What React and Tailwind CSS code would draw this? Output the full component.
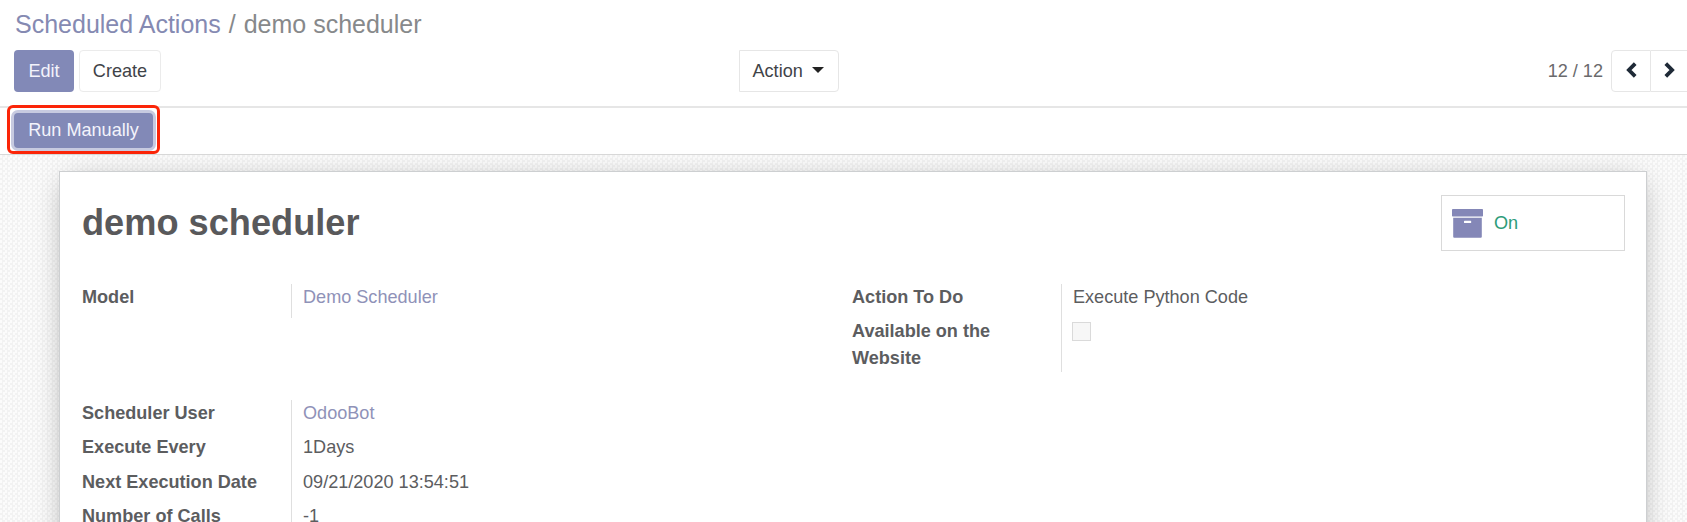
import React from "react";

function Chevron({ flip }) {
  return (
    <svg viewBox="0 0 11 16" className={flip ? "h-4 w-[11px] -scale-x-100" : "h-4 w-[11px]"} aria-hidden="true">
      <path d="M9.2 1.6 2.9 8l6.3 6.4" fill="none" stroke="#1f2a37" strokeWidth="3.8" />
    </svg>
  );
}

function ArchiveIcon() {
  return (
    <svg viewBox="0 0 31 29" className="h-[29px] w-[31px] shrink-0" fill="#8487b7" aria-hidden="true">
      <rect x="0" y="0" width="31" height="7.6" rx="0.8" />
      <path
        fillRule="evenodd"
        d="M1.2 8.8h28.6v18.9a1 1 0 0 1-1 1H2.2a1 1 0 0 1-1-1zM12.6 11.8a.6.6 0 0 0-.6.6v1.1c0 .3.3.6.6.6h6c.3 0 .6-.3.6-.6v-1.1a.6.6 0 0 0-.6-.6z"
      />
    </svg>
  );
}

function Group({ rows, className }) {
  return (
    <dl className={className}>
      {rows.map(([label, value], i) => (
        <div key={label} className="flex">
          <dt className={i === rows.length - 1 && rows.length === 2 ? "w-[209px] pr-10 font-bold" : "w-[209px] pb-[7.4px] font-bold whitespace-nowrap"}>
            {label}
          </dt>
          <dd className="border-l border-[#dfdfdf] pl-[11px] whitespace-nowrap">{value}</dd>
        </div>
      ))}
    </dl>
  );
}

const link = "text-[#8f92b8]";

export default function App() {
  return (
    <div className="flex h-[522px] w-[1687px] flex-col overflow-hidden bg-white font-['Liberation_Sans',Arial,sans-serif] text-[18.1px] leading-[27px] text-[#5c5d5f]">
      <header className="flex h-[108px] shrink-0 flex-col border-b-2 border-[#e6e6e6] pl-[14px]">
        <nav className="flex h-[50px] items-center gap-[8px] pb-[2px] pl-px text-[25px] text-[#87898b]">
          <a className="text-[#858ab2]">Scheduled Actions</a>
          <span>/</span>
          <span>demo scheduler</span>
        </nav>
        <div className="flex h-[42px]">
          <div className="flex w-[725px] gap-[5px]">
            <button className="h-full w-[60px] rounded-[4px] bg-[#8289b7] pt-px text-[#f3f3fb]">Edit</button>
            <button className="h-full w-[82px] rounded-[4px] border border-[#ebebeb] pt-px text-[#3f4348]">Create</button>
          </div>
          <button className="flex h-full w-[100px] items-center gap-[9px] rounded-r-[4px] border border-[#e6e6e6] pt-px pl-[12.5px] text-[#3f4348]">
            Action
            <span className="mb-[4px] border-x-[6px] border-t-[6px] border-x-transparent border-t-[#222]"></span>
          </button>
          <div className="ml-auto flex items-center">
            <span className="mr-[8px] pt-px text-[#6a6a6c]">12 / 12</span>
            <button className="flex h-full w-10 items-center justify-center rounded-l-[4px] border border-[#e6e6e6] pb-[3px]">
              <Chevron />
            </button>
            <button className="flex h-full w-9 items-center border-y border-[#e6e6e6] pb-[3px] pl-[13px]">
              <Chevron flip />
            </button>
          </div>
        </div>
      </header>
      <div className="flex h-[47px] shrink-0 border-b border-[#d8d8d8] bg-white pl-[7px]">
        <div className="relative z-10 -mt-[3px] flex h-[49px] w-[153px] items-center justify-center rounded-[6px] border-[3px] border-[#fb2508] pt-[2px]">
          <button className="h-[35px] w-[139px] rounded-[4px] bg-[#8289b7] pb-px text-[#f3f3fb] shadow-[0_0_0_3px_#c7cae0]">
            Run Manually
          </button>
        </div>
      </div>
      <main className="flex-1 bg-[#fbfbfb] bg-[conic-gradient(#f2f2f2_25%,transparent_0_50%,#f2f2f2_0_75%,transparent_0)] bg-size-[5px_5px] pt-4 pr-10 pl-[59px]">
        <section className="h-[400px] border border-[#cdcfd1] bg-white px-[22px] shadow-[0_5px_28px_-8px_rgba(0,0,0,0.38)]">
          <div className="flex h-[112px] justify-between">
            <h1 className="mt-6 text-[36.2px] leading-[54px] font-bold text-[#59595b]">demo scheduler</h1>
            <button className="mt-[23px] -mr-px flex h-[56px] w-[184px] items-center gap-[11px] border border-[#d9d9d9] pl-[10px] text-[#2c9c79]">
              <ArchiveIcon />
              <span className="pt-px">On</span>
            </button>
          </div>
          <div className="flex h-[116px]">
            <Group className="w-[770px]" rows={[["Model", <a className={link}>Demo Scheduler</a>]]} />
            <Group
              rows={[
                ["Action To Do", "Execute Python Code"],
                [
                  "Available on the Website",
                  <span className="-ml-px mt-[4px] block size-[19px] border border-[#dadada] bg-[#f7f7f7]"></span>,
                ],
              ]}
            />
          </div>
          <Group
            rows={[
              ["Scheduler User", <a className={link}>OdooBot</a>],
              ["Execute Every", "1Days"],
              ["Next Execution Date", "09/21/2020 13:54:51"],
              ["Number of Calls", "-1"],
            ]}
          />
        </section>
      </main>
    </div>
  );
}
